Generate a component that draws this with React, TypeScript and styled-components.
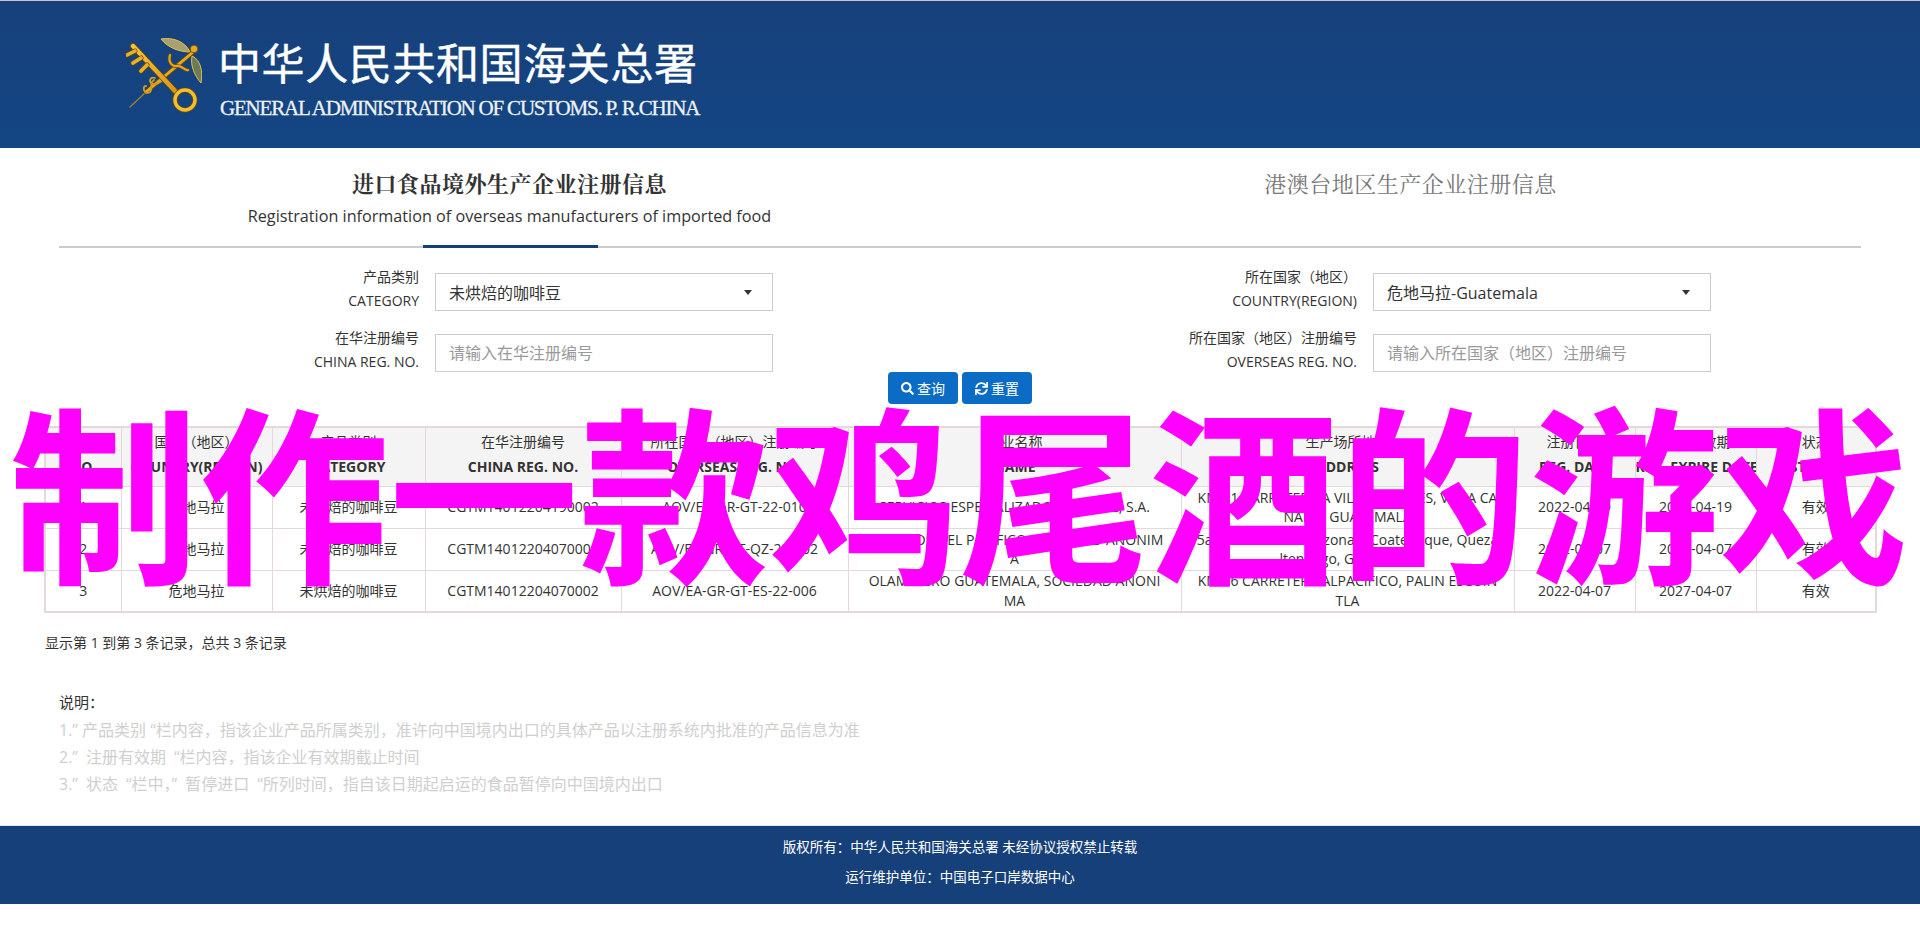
import React from "react";
import styled, { createGlobalStyle } from "styled-components";
import { FaSearch, FaSync } from "react-icons/fa";

const SANS = `"Open Sans", "Noto Sans CJK SC", sans-serif`;

const Global = createGlobalStyle`
  html, body { margin: 0; padding: 0; background: #fff; }
  body { font-family: ${SANS}; color: #333; font-size: 14px; }
`;

const Page = styled.div`
  position: relative;
  width: 1920px;
  height: 942px;
  overflow: hidden;
`;

const Header = styled.header`
  box-sizing: border-box;
  height: 148px;
  background: linear-gradient(#17407a, #134684);
  border-top: 1px solid #c8c8c8;
  padding: 37px 0 0 126px;
  display: flex;
  align-items: flex-start;
  gap: 18px;
`;

const LogoText = styled.div`
  display: flex;
  flex-direction: column;
  width: 480px;
`;

const LogoCn = styled.div`
  font-family: "Noto Sans CJK SC", serif;
  font-size: 43px;
  line-height: 46px;
  color: #fff;
  white-space: nowrap;
  letter-spacing: 0.6px;
  margin-left: -2px;
  -webkit-text-stroke: 0.4px #fff;
`;

const LogoEn = styled.div`
  font-family: "Liberation Serif", serif;
  font-size: 21px;
  line-height: 22px;
  margin-top: 13px;
  color: #eef1f5;
  white-space: nowrap;
  letter-spacing: -1.2px;
  -webkit-text-stroke: 0.3px #eef1f5;
`;

const Tabs = styled.nav`
  box-sizing: border-box;
  height: 100px;
  margin: 0 59px;
  border-bottom: 2px solid #ccc;
  display: grid;
  grid-template-columns: 1fr 1fr;
`;

const Tab = styled.div<{ $active?: boolean }>`
  position: relative;
  text-align: center;
  padding-top: 20px;
  &::after {
    content: "";
    display: ${(p) => (p.$active ? "block" : "none")};
    position: absolute;
    left: 50%;
    margin-left: -87px;
    bottom: -2px;
    width: 175px;
    height: 3px;
    background: #16407c;
  }
`;

const TabTitle = styled.div<{ $active?: boolean }>`
  font-family: "Noto Serif CJK SC", "Noto Sans CJK SC", serif;
  font-size: 22px;
  line-height: 30px;
  font-weight: ${(p) => (p.$active ? 700 : 400)};
  color: ${(p) => (p.$active ? "#333" : "#777")};
  letter-spacing: 0.5px;
`;

const TabSub = styled.div`
  font-size: 16.2px;
  line-height: 22px;
  margin-top: 7px;
  color: #333;
`;

const Form = styled.form`
  box-sizing: border-box;
  height: 124px;
  padding: 17px 0 0 119px;
  display: grid;
  grid-template-columns: 938px 938px;
  grid-auto-rows: 48px;
  row-gap: 13px;
  margin: 0;
`;

const Field = styled.div`
  display: flex;
  align-items: flex-start;
  gap: 16px;
`;

const FieldLabel = styled.label`
  width: 300px;
  text-align: right;
  font-size: 14px;
  line-height: 24px;
  color: #333;
`;

const LabelLine = styled.div``;

const SelectBox = styled.div`
  box-sizing: border-box;
  width: 338px;
  height: 38px;
  margin-top: 8px;
  border: 1px solid #ccc;
  padding: 0 20px 0 13px;
  display: flex;
  align-items: center;
  justify-content: space-between;
  font-size: 16px;
  color: #333;
`;

const Caret = styled.span`
  width: 0;
  height: 0;
  border-left: 4px solid transparent;
  border-right: 4px solid transparent;
  border-top: 5px solid #333;
`;

const TextInput = styled.input`
  box-sizing: border-box;
  width: 338px;
  height: 38px;
  margin-top: 8px;
  border: 1px solid #ccc;
  padding: 0 13px;
  font-family: ${SANS};
  font-size: 16px;
  outline: none;
  &::placeholder { color: #999; opacity: 1; }
`;

const Actions = styled.div`
  display: flex;
  justify-content: center;
  gap: 4px;
  height: 32px;
`;

const ActionButton = styled.button`
  box-sizing: border-box;
  width: 70px;
  height: 32px;
  border: 0;
  border-radius: 4px;
  background: #0b6cc6;
  color: #fff;
  font-family: ${SANS};
  font-size: 14px;
  display: inline-flex;
  align-items: center;
  justify-content: center;
  gap: 3px;
  padding: 0;
  svg { width: 13px; height: 13px; }
`;

const Table = styled.table`
  width: 1831px;
  margin: 22px 0 0 44px;
  border-collapse: collapse;
  table-layout: fixed;
  border: 2px solid #e4d8d8;
  font-size: 14px;
  color: #333;
`;

const HeadCell = styled.th`
  box-sizing: border-box;
  height: 59px;
  padding: 0 0 6px;
  background: #f4f4f4;
  border: 1px solid #e4d8d8;
  font-weight: 400;
  line-height: 25px;
  text-align: center;
  overflow: hidden;
  white-space: nowrap;
`;

const HeadEn = styled.div`
  font-weight: 700;
`;

const Cell = styled.td`
  box-sizing: border-box;
  height: 42px;
  padding: 0 14px;
  border: 1px solid #e4d8d8;
  line-height: 19.5px;
  text-align: center;
  word-break: break-all;
`;

const Summary = styled.div`
  margin: 20px 0 0 45px;
  font-size: 14px;
  line-height: 20px;
  color: #333;
`;

const Notes = styled.section`
  margin: 39px 0 0 59px;
`;

const NotesTitle = styled.div`
  font-size: 15px;
  line-height: 20px;
  color: #333;
  margin-bottom: 5px;
`;

const NoteItem = styled.div`
  font-size: 16px;
  line-height: 27px;
  color: #cfcfcf;
`;

const Footer = styled.footer`
  box-sizing: border-box;
  position: absolute;
  left: 0;
  right: 0;
  top: 825px;
  height: 79px;
  background: #16407a;
  border-top: 1px solid #e6e6e6;
  padding-top: 6px;
  text-align: center;
  color: #fff;
  font-size: 13.5px;
`;

const FooterLine = styled.div`
  line-height: 30px;
`;

const Watermark = styled.div`
  position: absolute;
  left: 9px;
  top: 362px;
  font-family: "Noto Sans CJK SC", sans-serif;
  font-size: 190px;
  line-height: 250px;
  font-weight: 700;
  color: #ff00ff;
  white-space: nowrap;
  pointer-events: none;
`;

const Logo = () => (
  <svg width="76" height="76" viewBox="16 18 76 76" aria-hidden="true">
    <defs>
      <linearGradient id="gold" x1="0" y1="0" x2="1" y2="1">
        <stop offset="0" stopColor="#f6c63a" />
        <stop offset="1" stopColor="#d8971a" />
      </linearGradient>
    </defs>
    <path d="M51 19 C62 17 75 21 80 32 C70 32 58 28 51 19 Z" fill="#a8a070" stroke="#e6c14a" strokeWidth="1" />
    <path d="M82 36 C91 40 93 52 91 63 C85 56 80 46 82 36 Z" fill="#6f7a58" stroke="#e6c14a" strokeWidth="1" />
    <g fill="none" strokeLinecap="round" strokeLinejoin="round">
      <path d="M20 87 L36 72" stroke="#a07a3a" strokeWidth="1.4" />
      <path d="M36 72 L82 33" stroke="#6e4a06" strokeWidth="4.4" />
      <path d="M36 72 L82 33" stroke="#e6ab26" strokeWidth="2.8" />
      <path d="M60 35 C58 42 62 47 67 46 C72 45 76 52 78 50" stroke="#6e4a06" strokeWidth="3.6" />
      <path d="M60 35 C58 42 62 47 67 46 C72 45 76 52 78 50" stroke="#e0a522" strokeWidth="2.2" />
      <path d="M45 58 C40 56 38 62 43 64 C49 66 52 58 57 60 M36 66 C31 66 35 76 40 72 C44 68 38 64 44 60" stroke="#d49c1e" strokeWidth="1.8" />
      <path d="M23 26 L66 72" stroke="#6e4a06" strokeWidth="6" />
      <path d="M23 26 L66 72" stroke="url(#gold)" strokeWidth="4.4" />
      <path d="M25 31 L17 35 M31 38 L23 43 M37 45 L31 51" stroke="#6e4a06" strokeWidth="5" />
      <path d="M25 31 L17 35 M31 38 L23 43 M37 45 L31 51" stroke="#eab02a" strokeWidth="3.6" />
      <ellipse cx="75" cy="80" rx="10" ry="10" stroke="#6e4a06" strokeWidth="5" />
      <ellipse cx="75" cy="80" rx="10" ry="10" stroke="#f2bf30" strokeWidth="3.4" />
    </g>
    <circle cx="84" cy="29" r="3.8" fill="#e8a820" stroke="#6e4a06" strokeWidth="0.8" />
  </svg>
);

const heads: [string, string][] = [
  ["序号", "NO."],
  ["国家（地区）", "COUNTRY(REGION)"],
  ["产品类别", "CATEGORY"],
  ["在华注册编号", "CHINA REG. NO."],
  ["所在国家（地区）注册编号", "OVERSEAS REG. NO."],
  ["企业名称", "NAME"],
  ["生产场所地址", "ADDRESS"],
  ["注册日期", "REG. DATE"],
  ["注册有效期", "REG. EXPIRE DATE"],
  ["状态", "STATUS"],
];

const widths = [76, 151, 153, 196, 227, 333, 333, 121, 121, 120];

const rows: string[][] = [
  ["1", "危地马拉", "未烘焙的咖啡豆", "CGTM14012204190002", "AOV/EA-GR-GT-22-010", "SERVICIOS ESPECIALIZADOS EN CAFE, S.A.", "KM 11 CARRETERA A VILLA CANALES, VILLA CANALES GUATEMALA", "2022-04-19", "2027-04-19", "有效"],
  ["2", "危地马拉", "未烘焙的咖啡豆", "CGTM14012204070001", "AOV/ET-GR-GT-QZ-22-002", "SERVICIOS DEL PACIFICO, SOCIEDAD ANONIMA", "5a Calle final 25-59 zona 1 Coatepeque, Quezaltenango, Guatemala", "2022-04-07", "2027-04-07", "有效"],
  ["3", "危地马拉", "未烘焙的咖啡豆", "CGTM14012204070002", "AOV/EA-GR-GT-ES-22-006", "OLAM AGRO GUATEMALA, SOCIEDAD ANONIMA", "KM 56 CARRETERA ALPACIFICO, PALIN ESCUINTLA", "2022-04-07", "2027-04-07", "有效"],
];

export default function App() {
  return (
    <Page>
      <Global />
      <Header>
        <Logo />
        <LogoText>
          <LogoCn>中华人民共和国海关总署</LogoCn>
          <LogoEn>GENERAL ADMINISTRATION OF CUSTOMS. P. R.CHINA</LogoEn>
        </LogoText>
      </Header>
      <Tabs>
        <Tab $active>
          <TabTitle $active>进口食品境外生产企业注册信息</TabTitle>
          <TabSub>Registration information of overseas manufacturers of imported food</TabSub>
        </Tab>
        <Tab>
          <TabTitle>港澳台地区生产企业注册信息</TabTitle>
        </Tab>
      </Tabs>
      <Form>
        <Field>
          <FieldLabel>
            <LabelLine>产品类别</LabelLine>
            <LabelLine>CATEGORY</LabelLine>
          </FieldLabel>
          <SelectBox>
            未烘焙的咖啡豆
            <Caret />
          </SelectBox>
        </Field>
        <Field>
          <FieldLabel>
            <LabelLine>所在国家（地区）</LabelLine>
            <LabelLine>COUNTRY(REGION)</LabelLine>
          </FieldLabel>
          <SelectBox>
            危地马拉-Guatemala
            <Caret />
          </SelectBox>
        </Field>
        <Field>
          <FieldLabel>
            <LabelLine>在华注册编号</LabelLine>
            <LabelLine>CHINA REG. NO.</LabelLine>
          </FieldLabel>
          <TextInput placeholder="请输入在华注册编号" />
        </Field>
        <Field>
          <FieldLabel>
            <LabelLine>所在国家（地区）注册编号</LabelLine>
            <LabelLine>OVERSEAS REG. NO.</LabelLine>
          </FieldLabel>
          <TextInput placeholder="请输入所在国家（地区）注册编号" />
        </Field>
      </Form>
      <Actions>
        <ActionButton type="button">
          <FaSearch />
          查询
        </ActionButton>
        <ActionButton type="button">
          <FaSync />
          重置
        </ActionButton>
      </Actions>
      <Table>
        <colgroup>
          {widths.map((w, i) => (
            <col key={i} width={w} />
          ))}
        </colgroup>
        <thead>
          <tr>
            {heads.map(([cn, en]) => (
              <HeadCell key={en}>
                <div>{cn}</div>
                <HeadEn>{en}</HeadEn>
              </HeadCell>
            ))}
          </tr>
        </thead>
        <tbody>
          {rows.map((r) => (
            <tr key={r[0]}>
              {r.map((c, i) => (
                <Cell key={i}>{c}</Cell>
              ))}
            </tr>
          ))}
        </tbody>
      </Table>
      <Summary>显示第 1 到第 3 条记录，总共 3 条记录</Summary>
      <Notes>
        <NotesTitle>说明：</NotesTitle>
        <NoteItem>1.” 产品类别 “栏内容，指该企业产品所属类别，准许向中国境内出口的具体产品以注册系统内批准的产品信息为准</NoteItem>
        <NoteItem>2.”{"\u2002"}注册有效期{"\u2002"}“栏内容，指该企业有效期截止时间</NoteItem>
        <NoteItem>3.”{"\u2002"}状态{"\u2002"}“栏中，”{"\u2002"}暂停进口{"\u2002"}“所列时间，指自该日期起启运的食品暂停向中国境内出口</NoteItem>
      </Notes>
      <Footer>
        <FooterLine>版权所有：中华人民共和国海关总署 未经协议授权禁止转载</FooterLine>
        <FooterLine>运行维护单位：中国电子口岸数据中心</FooterLine>
      </Footer>
      <Watermark>制作一款鸡尾酒的游戏</Watermark>
    </Page>
  );
}
